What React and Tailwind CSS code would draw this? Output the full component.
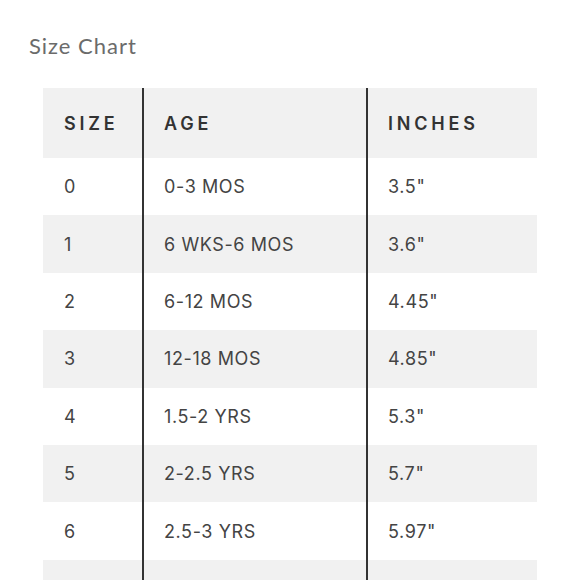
const ROWS = [
  ['0', '0-3 MOS', '3.5"'],
  ['1', '6 WKS-6 MOS', '3.6"'],
  ['2', '6-12 MOS', '4.45"'],
  ['3', '12-18 MOS', '4.85"'],
  ['4', '1.5-2 YRS', '5.3"'],
  ['5', '2-2.5 YRS', '5.7"'],
  ['6', '2.5-3 YRS', '5.97"'],
  ['', '', ''],
]

export default function App() {
  return (
    <div className="w-[580px] h-[580px] overflow-hidden bg-white font-['Inter',sans-serif]">
      <h2 className="pl-[29px] pt-[31px] h-[88px] text-[22px] leading-[30px] tracking-[1px] text-[#6b6b6b] font-['Lato',sans-serif]">
        Size Chart
      </h2>
      <div className="ml-[43px] w-[494px]">
        <div className="grid grid-cols-[99px_224px_171px] h-[70px] bg-[#f1f1f1] text-[18px] font-semibold tracking-[3.8px] text-[#333]">
          <div className="pl-[21px] flex items-center">SIZE</div>
          <div className="pl-[20px] flex items-center border-l-2 border-[#333]">AGE</div>
          <div className="pl-[20px] flex items-center border-l-2 border-[#333]">INCHES</div>
        </div>
        {ROWS.map((r, i) => (
          <div
            key={i}
            className={`grid grid-cols-[99px_224px_171px] h-[57.4px] text-[18px] tracking-[0.6px] text-[#444] ${i % 2 ? 'bg-[#f1f1f1]' : 'bg-white'}`}
          >
            <div className="pl-[21px] flex items-center">{r[0]}</div>
            <div className="pl-[20px] flex items-center border-l-2 border-[#333]">{r[1]}</div>
            <div className="pl-[20px] flex items-center border-l-2 border-[#333]">{r[2]}</div>
          </div>
        ))}
      </div>
    </div>
  )
}
